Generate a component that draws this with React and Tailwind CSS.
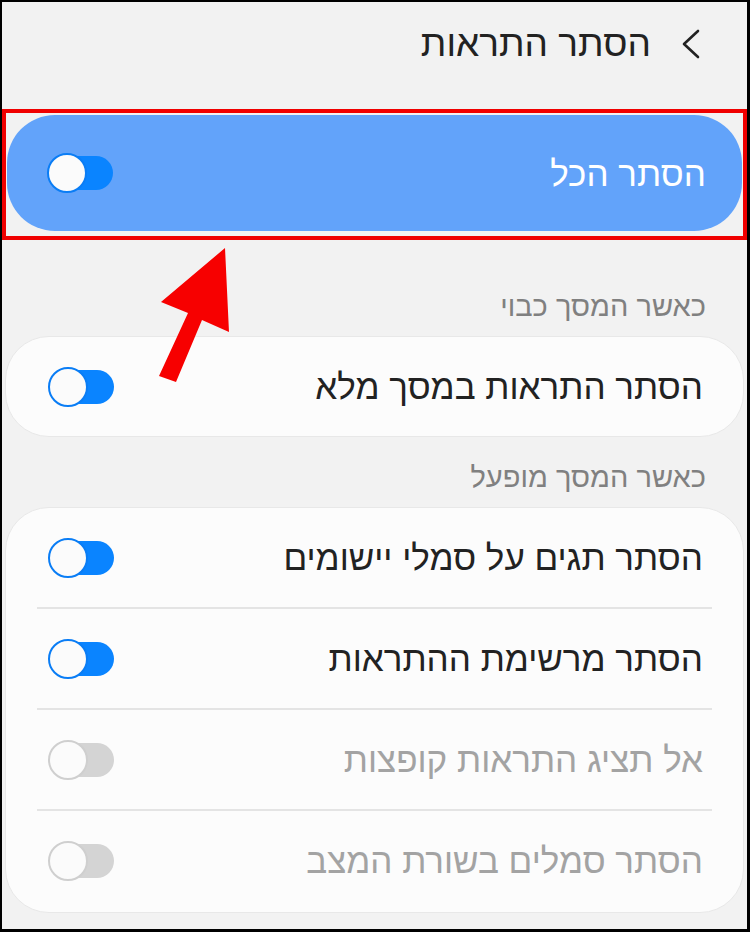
import React from "react";

function Toggle({ disabled }) {
  return (
    <div className="relative w-[66px] h-[40px] shrink-0" dir="ltr">
      <div
        className={
          "absolute right-0 top-[3px] h-[34px] w-[58px] rounded-full " +
          (disabled ? "bg-[#d4d4d4]" : "bg-[#0a84ff]")
        }
      />
      <div
        className={
          "absolute left-0 top-0 h-[40px] w-[40px] rounded-full bg-[#fbfbfb] border-[2.5px] " +
          (disabled ? "border-[#cfcfcf]" : "border-[#0a7df5]")
        }
      />
    </div>
  );
}

function Row({ text, disabled, divider }) {
  return (
    <div className="flex flex-col">
      <div className="flex items-center justify-between h-[99px] pr-[40px] pl-[42px]">
        <span
          className={
            "text-[35px] leading-none " +
            (disabled ? "text-[#a3a3a3]" : "text-[#222222]")
          }
        >
          {text}
        </span>
        <Toggle disabled={disabled} />
      </div>
      {divider && <div className="mx-[31px] h-[2px] bg-[#e4e4e4]" />}
    </div>
  );
}

export default function App() {
  return (
    <div
      className="w-[750px] h-[932px] bg-black pt-[2px] pl-[2px] pr-[3px] pb-[3px]"
      style={{ fontFamily: '"Liberation Sans", "DejaVu Sans", sans-serif' }}
    >
      <div dir="rtl" className="relative w-full h-full bg-[#f2f2f2] flex flex-col">
        {/* Header */}
        <div className="h-[107px] flex items-center pr-[46px] pb-[24px] gap-[30px]">
          <svg width="20" height="32" viewBox="0 0 20 32" className="shrink-0">
            <path d="M17 3 L3 16 L17 29" fill="none" stroke="#222" strokeWidth="2.6" strokeLinecap="round" strokeLinejoin="round" />
          </svg>
          <span className="text-[37px] leading-none text-[#222222]">הסתר התראות</span>
        </div>

        {/* Highlighted card */}
        <div className="border-[4px] border-[#f00000] pt-[2px] pb-[5px] px-[1px]">
          <div className="h-[116px] rounded-[48px] bg-[#62a3fa] flex items-center justify-between pr-[36px] pl-[40px]">
            <span className="text-[35px] leading-none text-white">הסתר הכל</span>
            <Toggle />
          </div>
        </div>

        {/* Section 1 */}
        <div className="h-[96px] flex items-end pr-[41px] pb-[15px]">
          <span className="text-[29px] leading-none text-[#808080]">כאשר המסך כבוי</span>
        </div>
        <div className="mx-[3px] rounded-[44px] bg-[#fcfcfc] border border-[#e8e8e8]">
          <Row text="הסתר התראות במסך מלא" />
        </div>

        {/* Section 2 */}
        <div className="h-[70px] flex items-end pr-[41px] pb-[15px]">
          <span className="text-[29px] leading-none text-[#808080]">כאשר המסך מופעל</span>
        </div>
        <div className="mx-[3px] rounded-[44px] bg-[#fcfcfc] border border-[#e8e8e8] pb-[2px]">
          <Row text="הסתר תגים על סמלי יישומים" divider />
          <Row text="הסתר מרשימת ההתראות" divider />
          <Row text="אל תציג התראות קופצות" disabled divider />
          <Row text="הסתר סמלים בשורת המצב" disabled />
        </div>

        {/* Annotation arrow */}
        <svg
          className="absolute left-[138px] top-[238px] pointer-events-none"
          width="110"
          height="150"
          viewBox="140 240 110 150"
        >
          <polygon
            points="225,248 229,332 202,320 176,382 159,376 188,313 161,302"
            fill="#f70000"
          />
        </svg>
      </div>
    </div>
  );
}
